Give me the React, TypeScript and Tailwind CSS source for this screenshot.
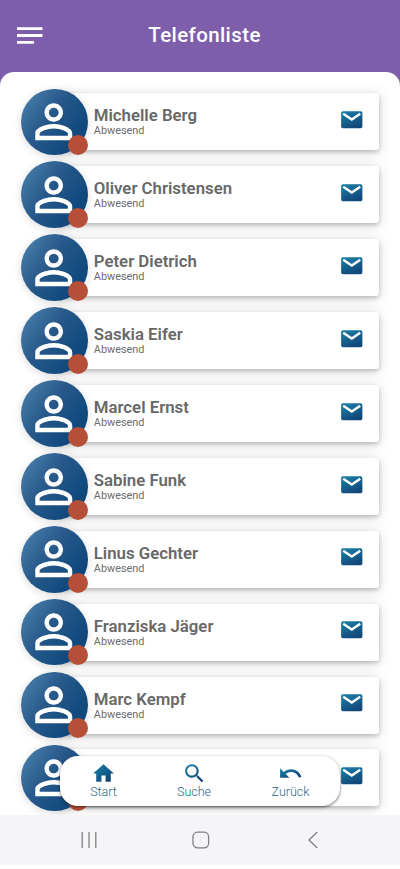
import type { ReactNode } from "react";

const contacts = [
  "Michelle Berg",
  "Oliver Christensen",
  "Peter Dietrich",
  "Saskia Eifer",
  "Marcel Ernst",
  "Sabine Funk",
  "Linus Gechter",
  "Franziska Jäger",
  "Marc Kempf",
];

function Gradients() {
  return (
    <svg className="absolute size-0" aria-hidden="true">
      <defs>
        <linearGradient id="mail" x1="0" y1="0" x2="0.5" y2="1">
          <stop offset="0" stopColor="#1c83ab" />
          <stop offset="1" stopColor="#12487a" />
        </linearGradient>
        <linearGradient id="nav" x1="0" y1="0" x2="1" y2="1">
          <stop offset="0" stopColor="#1886ad" />
          <stop offset="1" stopColor="#103a6c" />
        </linearGradient>
      </defs>
    </svg>
  );
}

function Avatar() {
  return (
    <div className="relative z-10 flex size-[66.6px] shrink-0 items-center justify-center rounded-full bg-linear-[125deg,#4a80ac_5%,#27598a_42%,#0f487c_80%] shadow-[0_2px_8px_rgba(0,0,0,0.14)]">
      <svg viewBox="0 0 24 24" className="mr-px size-[55.5px] fill-white">
        <path d="M12 5.9c1.16 0 2.1.94 2.1 2.1s-.94 2.1-2.1 2.1S9.9 9.16 9.9 8s.94-2.1 2.1-2.1m0 9c2.97 0 6.1 1.46 6.1 2.1v1.1H5.9V17c0-.64 3.13-2.1 6.1-2.1M12 4C9.79 4 8 5.79 8 8s1.79 4 4 4 4-1.79 4-4-1.79-4-4-4zm0 9c-2.67 0-8 1.34-8 4v3h16v-3c0-2.66-5.33-4-8-4z" />
      </svg>
      <span className="absolute right-0 bottom-0 size-5 rounded-full bg-[#b64f38]" />
    </div>
  );
}

function Contact({ name }: { name?: string }) {
  return (
    <li className="flex items-center">
      <Avatar />
      <div className="-ml-8 flex h-[57px] flex-1 items-center rounded-[3px] bg-white pr-[15.2px] pl-[38.2px] shadow-[0_2px_4px_rgba(0,0,0,0.2),0_2px_14px_rgba(0,0,0,0.16)]">
        {name && (
          <div>
            <div className="text-[16.8px] leading-[18px] font-semibold text-[#686868]">{name}</div>
            <div className="text-[10.9px] leading-[13px] text-[#6c6c6c]">Abwesend</div>
          </div>
        )}
        <svg viewBox="0 0 24 24" className="mb-1 ml-auto size-[25.5px]">
          <rect x="2" y="4" width="20" height="16" rx="1.6" fill="url(#mail)" />
          <path d="M4 6.400l8 5.400 8-5.400" className="fill-none stroke-white stroke-[2.2]" />
        </svg>
      </div>
    </li>
  );
}

function NavItem({ label, children }: { label: string; children: ReactNode }) {
  return (
    <div className="flex w-full flex-col items-center">
      <svg viewBox="0 0 24 24" className="size-[25px]">
        {children}
      </svg>
      <span className="-mt-px text-[12.5px] leading-[14px] font-light text-[#2e6688]">{label}</span>
    </div>
  );
}

export default function App() {
  return (
    <div className="relative flex h-[869px] w-[400px] flex-col overflow-hidden bg-[#7e5eab] font-[Roboto,sans-serif]">
      <Gradients />
      <header className="grid h-[71.7px] shrink-0 grid-cols-[69px_1fr_60px] items-center">
        <svg viewBox="0 0 26 18" className="ml-[16.5px] h-[18px] w-[26px] fill-white">
          <path d="M0 .2h25.500v2.900H0zM0 7.100h25.500v2.800H0zM0 14h17v2.800H0z" />
        </svg>
        <h1 className="pb-[2px] text-center text-[20.5px] leading-6 font-medium tracking-[0.4px] text-white">
          Telefonliste
        </h1>
      </header>
      <main className="h-[743.3px] shrink-0 overflow-hidden rounded-t-[14px] bg-white pt-[16.9px] pr-[20.8px] pl-[21px]">
        <ul className="flex flex-col gap-[6.3px]">
          {contacts.map((name) => (
            <Contact key={name} name={name} />
          ))}
          <Contact />
        </ul>
      </main>
      <nav className="absolute top-[756px] left-[60px] z-20 grid h-[50px] w-[280px] grid-cols-[87px_94px_99px] rounded-[18px] bg-white pt-[4.5px] shadow-[0_1px_3px_rgba(0,0,0,0.6)]">
        <NavItem label="Start">
          <path fill="url(#nav)" d="M10 20v-6h4v6h5v-8h3L12 3 2 12h3v8z" />
        </NavItem>
        <NavItem label="Suche">
          <path
            fill="url(#nav)"
            d="M15.500 14h-.79l-.28-.27C15.410 12.590 16 11.110 16 9.500 16 5.910 13.090 3 9.500 3S3 5.910 3 9.500 5.910 16 9.500 16c1.610 0 3.090-.59 4.230-1.570l.27.280v.790l5 4.990L20.490 19l-4.990-5zm-6 0C7.010 14 5 11.990 5 9.500S7.010 5 9.500 5 14 7.010 14 9.500 11.990 14 9.500 14z"
          />
        </NavItem>
        <NavItem label="Zurück">
          <path
            fill="url(#nav)"
            d="M12.500 8c-2.650 0-5.050.99-6.900 2.600L2 7v9h9l-3.620-3.620c1.390-1.160 3.160-1.880 5.120-1.880 3.540 0 6.550 2.310 7.600 5.500l2.370-.78C21.080 11.030 17.150 8 12.500 8z"
          />
        </NavItem>
      </nav>
      <footer className="flex h-[50px] shrink-0 items-center bg-[#f5f5f7] pl-[80px]">
        <svg viewBox="0 0 18 18" className="size-[18px] fill-none stroke-[#808083] stroke-[1.3]">
          <path d="M2.200 1v16M9 1v16M15.800 1v16" />
        </svg>
        <svg viewBox="0 0 18 18" className="ml-[94px] size-[18px] fill-none stroke-[#808083] stroke-[1.3]">
          <rect x="1" y="1.200" width="15.600" height="15.600" rx="4.500" />
        </svg>
        <svg viewBox="0 0 10 18" className="ml-[98px] h-[18px] w-[10px] fill-none stroke-[#808083] stroke-[1.3]">
          <path d="M9.300 1 1 9l8.300 8" />
        </svg>
      </footer>
      <div className="h-1 shrink-0 bg-white" />
    </div>
  );
}
